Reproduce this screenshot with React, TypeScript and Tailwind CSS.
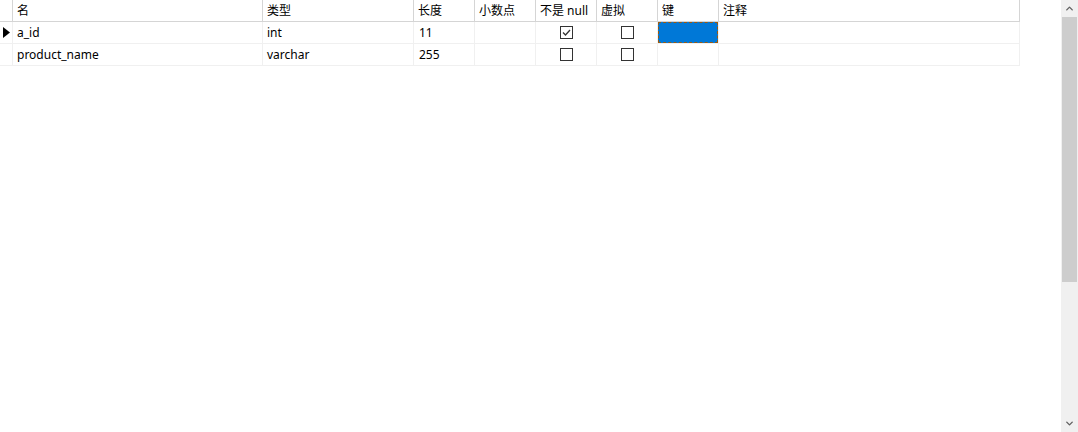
import { ChevronUp, ChevronDown } from 'lucide-react'

type Field = {
  name: string
  type: string
  length: string
  decimals: string
  notNull: boolean
  virtual: boolean
  key: string
  comment: string
}

const fields: Field[] = [
  { name: 'a_id', type: 'int', length: '11', decimals: '', notNull: true, virtual: false, key: '', comment: '' },
  { name: 'product_name', type: 'varchar', length: '255', decimals: '', notNull: false, virtual: false, key: '', comment: '' },
]

function CheckBox({ checked }: { checked: boolean }) {
  return (
    <div className="w-[13px] h-[13px] border border-[#333333] bg-white flex items-center justify-center">
      {checked && (
        <svg width="9" height="9" viewBox="0 0 9 9">
          <path d="M1 4.5 L3.5 7 L8 2" fill="none" stroke="#333333" strokeWidth="1.3" />
        </svg>
      )}
    </div>
  )
}

export default function App() {
  const cols = 'grid grid-cols-[13px_250px_151px_61px_61px_61px_61px_61px_301px]'

  return (
    <div
      className="relative w-[1078px] h-[432px] bg-white overflow-hidden text-[12px] text-[#000000]"
      style={{ fontFamily: '"Noto Sans", "Noto Sans CJK SC", sans-serif' }}
    >
      <div className="w-[1020px]">
        {/* 表头 */}
        <div className={`${cols} h-[22px] border-b border-[#d5d5d5]`}>
          <div className="border-r border-[#d5d5d5]" />
          {['名', '类型', '长度', '小数点', '不是 null', '虚拟', '键', '注释'].map(h => (
            <div key={h} className="pl-[4px] leading-[21px] whitespace-nowrap overflow-hidden border-r border-[#d5d5d5]">
              {h}
            </div>
          ))}
        </div>

        {/* 行 */}
        {fields.map((f, r) => (
          <div key={f.name} className={`${cols} h-[22px] border-b border-[#f0f0f0]`}>
            <div className="border-r border-[#f0f0f0] flex items-center justify-center">
              {r === 0 && (
                <svg width="7" height="11" viewBox="0 0 7 11">
                  <path d="M0 0 L7 5.5 L0 11 Z" fill="#000000" />
                </svg>
              )}
            </div>
            <div className="pl-[4px] leading-[21px] border-r border-[#f0f0f0]">{f.name}</div>
            <div className="pl-[4px] leading-[21px] border-r border-[#f0f0f0]">{f.type}</div>
            <div className="pl-[5px] leading-[21px] border-r border-[#f0f0f0]">{f.length}</div>
            <div className="pl-[5px] leading-[21px] border-r border-[#f0f0f0]">{f.decimals}</div>
            <div className="border-r border-[#f0f0f0] flex items-center justify-center">
              <CheckBox checked={f.notNull} />
            </div>
            <div className="border-r border-[#f0f0f0] flex items-center justify-center">
              <CheckBox checked={f.virtual} />
            </div>
            <div className="border-r border-[#f0f0f0]">
              {r === 0 && (
                <div className="h-[21px] bg-[#0078d7] border border-dashed border-[#9a5a10]" />
              )}
            </div>
            <div className="pl-[5px] leading-[21px] border-r border-[#f0f0f0]">{f.comment}</div>
          </div>
        ))}
      </div>

      {/* 滚动条 */}
      <div className="absolute top-0 right-0 w-[17px] h-[432px] bg-[#f0f0f0] flex flex-col">
        <div className="h-[17px] flex items-center justify-center">
          <ChevronUp size={11} strokeWidth={3} className="text-[#606060]" />
        </div>
        <div className="mx-[1px] h-[265px] bg-[#cdcdcd]" />
        <div className="flex-1" />
        <div className="h-[17px] flex items-center justify-center">
          <ChevronDown size={11} strokeWidth={3} className="text-[#606060]" />
        </div>
      </div>
    </div>
  )
}
